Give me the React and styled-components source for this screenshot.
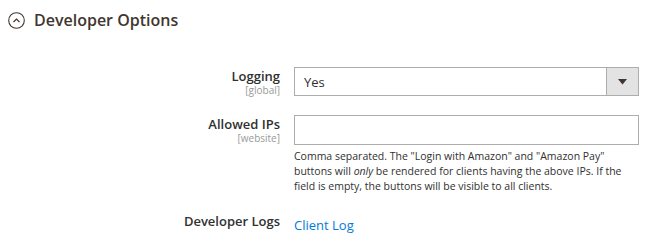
import React from "react";
import styled, { createGlobalStyle } from "styled-components";

const GlobalStyle = createGlobalStyle`
    body {
        margin: 0;
        background: #ffffff;
        font-family: "Open Sans", "Liberation Sans", sans-serif;
        color: #303030;
    }
`;

const Main = styled.main`
    width: 661px;
    height: 247px;
    padding: 10px 0 0 8px;
    box-sizing: border-box;
    overflow: hidden;
`;

const Title = styled.h2`
    display: flex;
    align-items: center;
    gap: 9px;
    margin: 0 0 37px;
    font-size: 16px;
    font-weight: 600;
    color: #41362f;
    line-height: 20px;
`;

const Fields = styled.div`
    display: flex;
    flex-direction: column;
`;

const Row = styled.div`
    display: grid;
    grid-template-columns: 272px 345px;
    column-gap: 14px;
    align-items: start;
    margin-bottom: ${(p) => p.gap || 0}px;
`;

const Label = styled.div`
    text-align: right;
    padding-top: ${(p) => p.top || 0}px;
`;

const LabelText = styled.div`
    font-size: 13px;
    font-weight: 600;
    color: #303030;
    line-height: 16px;
`;

const Scope = styled.div`
    font-size: 10px;
    color: #999999;
    line-height: 12px;
`;

const Select = styled.div`
    display: flex;
    height: 29px;
    border: 1px solid #adadad;
    box-sizing: border-box;
`;

const SelectValue = styled.div`
    flex: 1;
    padding: 0 10px 0 9px;
    font-size: 13px;
    line-height: 28px;
    color: #303030;
`;

const SelectArrow = styled.div`
    width: 31px;
    background: #e3e3e3;
    border-left: 1px solid #adadad;
    display: flex;
    align-items: center;
    justify-content: center;
`;

const Input = styled.div`
    height: 30px;
    border: 1px solid #adadad;
    box-sizing: border-box;
`;

const Note = styled.p`
    margin: 4px 0 0;
    font-size: 10.5px;
    line-height: 15px;
    color: #303030;
`;

const Value = styled.div`
    padding-top: ${(p) => p.top || 0}px;
`;

const Link = styled.a`
    font-size: 13px;
    color: #007bdb;
    text-decoration: none;
    line-height: 16px;
`;

const App = () => (
    <Main>
        <GlobalStyle />
        <Title>
            <svg width="17" height="17" viewBox="0 0 17 17">
                <circle cx="8.5" cy="8.5" r="7.8" fill="none" stroke="#41362f" strokeWidth="1.1" />
                <path d="M5.5 10 L8.5 7 L11.5 10" fill="none" stroke="#41362f" strokeWidth="1.2" />
            </svg>
            Developer Options
        </Title>
        <Fields>
            <Row gap={19}>
                <Label top={1}>
                    <LabelText>Logging</LabelText>
                    <Scope>[global]</Scope>
                </Label>
                <Select>
                    <SelectValue>Yes</SelectValue>
                    <SelectArrow>
                        <svg width="9" height="6" viewBox="0 0 9 6">
                            <path d="M0 0 H9 L4.5 5.5 Z" fill="#41362f" />
                        </svg>
                    </SelectArrow>
                </Select>
            </Row>
            <Row gap={19}>
                <Label top={1}>
                    <LabelText>Allowed IPs</LabelText>
                    <Scope>[website]</Scope>
                </Label>
                <div>
                    <Input />
                    <Note>
                        Comma separated. The "Login with Amazon" and "Amazon Pay" buttons will <em>only</em> be
                        rendered for clients having the above IPs. If the field is empty, the buttons will be
                        visible to all clients.
                    </Note>
                </div>
            </Row>
            <Row>
                <Label top={0}>
                    <LabelText>Developer Logs</LabelText>
                </Label>
                <Value top={0}>
                    <Link href="#">Client Log</Link>
                </Value>
            </Row>
        </Fields>
    </Main>
);

export default App;
